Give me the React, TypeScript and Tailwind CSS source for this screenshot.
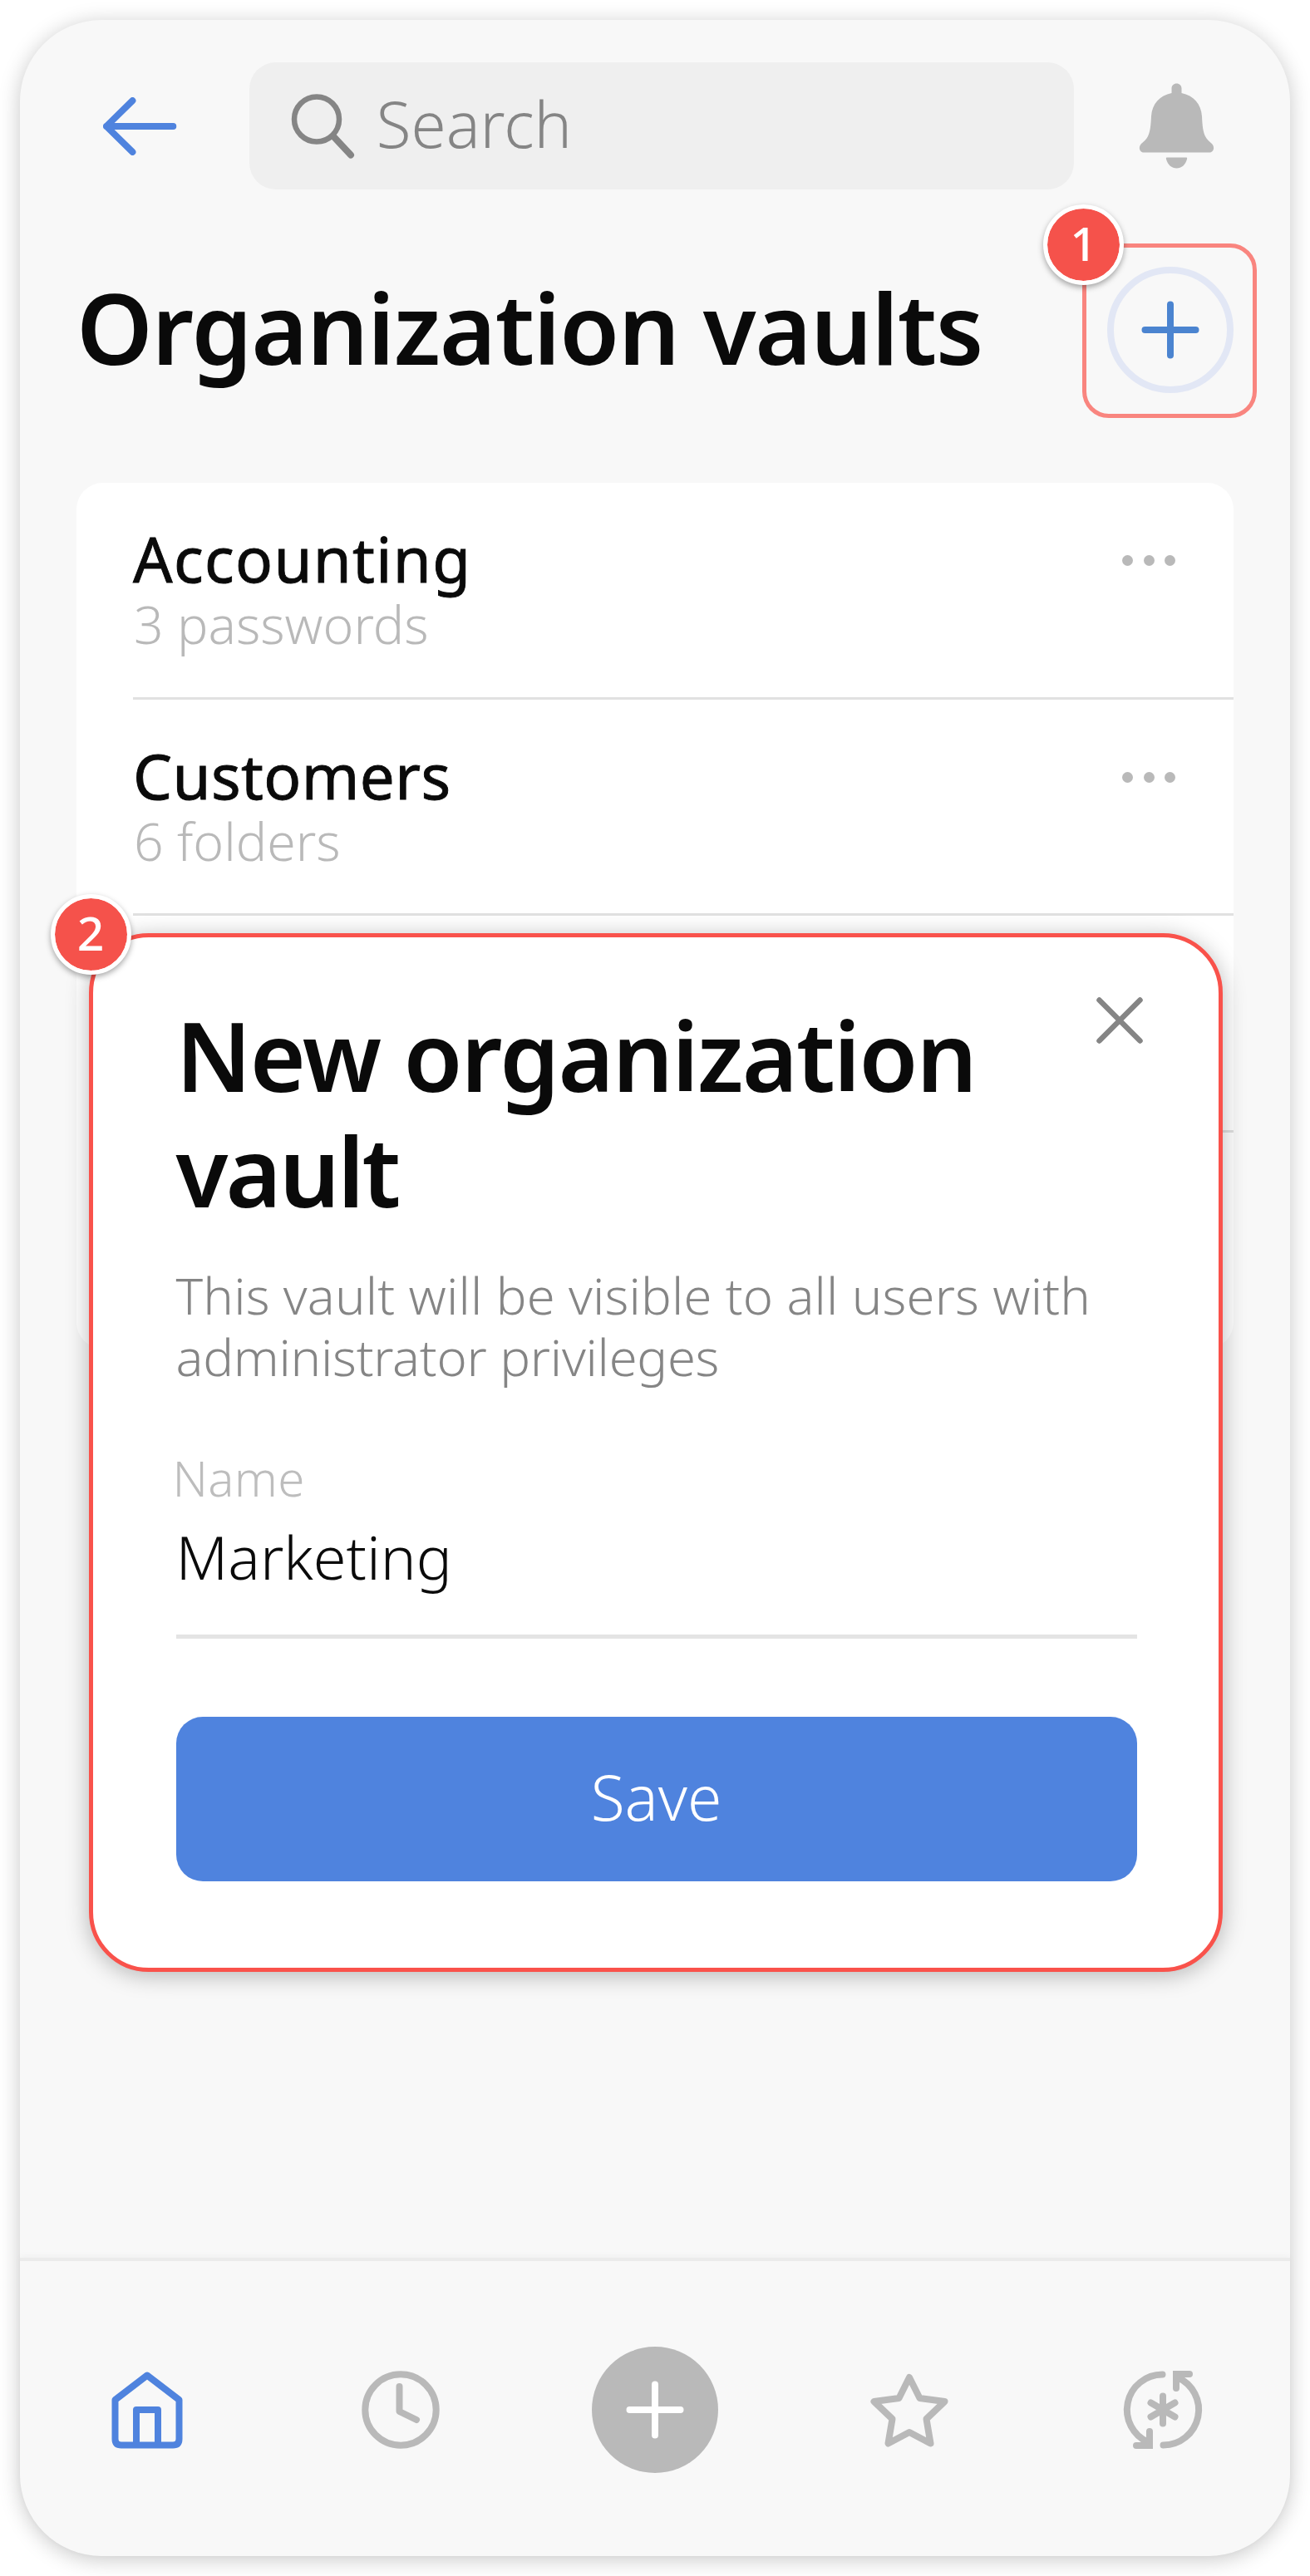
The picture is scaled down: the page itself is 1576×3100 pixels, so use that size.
import type { ReactNode } from "react";

function ArrowLeft() {
  return (
    <svg width="90" height="70" viewBox="0 0 90 70" fill="none" stroke="#4f83de" strokeWidth="8" strokeLinecap="round" strokeLinejoin="round">
      <path d="M35.500 4 L4 35 L35.500 66 M4 35 H84.500" />
    </svg>
  );
}

function Magnifier() {
  return (
    <svg width="78" height="80" viewBox="0 0 78 80" fill="none" stroke="#858585" strokeLinecap="round">
      <circle cx="31" cy="31.500" r="27" strokeWidth="6.500" />
      <path d="M51 52 L72 74.500" strokeWidth="8" />
    </svg>
  );
}

function Bell() {
  return (
    <svg width="92" height="104" viewBox="0 0 92 104" fill="#b9b9b9">
      <path d="M45.500 0.500 C49 0.500 51.500 3 51.500 6.500 V12 C66 15 75 25 76 40 C76.500 52 77.500 59 80 64 C82 68 85 70 88 73 C92 77 90 83.500 85 83.500 H6 C1 83.500 -1 77 3 73 C6 70 9 68 11 64 C13.500 59 14.500 52 15 40 C16 25 25 15 39.500 12 V6.500 C39.500 3 42 0.500 45.500 0.500 Z" />
      <path d="M33.500 89.500 H57.500 Q58.500 89.500 58 91.500 C56 98.500 51.500 102.500 45.500 102.500 C39.500 102.500 35 98.500 33 91.500 Q32.500 89.500 33.500 89.500 Z" />
    </svg>
  );
}

function Plus({ color }: { color: string }) {
  return (
    <svg width="70" height="70" viewBox="0 0 70 70" fill="none" stroke={color} strokeWidth="8" strokeLinecap="round">
      <path d="M35 4.500 V65.500 M4.500 35 H65.500" />
    </svg>
  );
}

function Close() {
  return (
    <svg width="56" height="56" viewBox="0 0 56 56" fill="none" stroke="#858585" strokeWidth="6.500" strokeLinecap="round">
      <path d="M3.500 3.500 L52.500 52.500 M52.500 3.500 L3.500 52.500" />
    </svg>
  );
}

function NavIcon({ color, children }: { color: string; children: ReactNode }) {
  return (
    <svg width="100" height="100" viewBox="-50 -50 100 100" fill="none" stroke={color} strokeWidth="8" strokeLinecap="round" strokeLinejoin="round">
      {children}
    </svg>
  );
}

function Badge({ children, className }: { children: ReactNode; className: string }) {
  return (
    <div className={`absolute flex size-[97px] items-center justify-center rounded-full border-[5.5px] border-white bg-[#f5524b] bg-clip-padding text-[57px] leading-none font-medium text-white shadow-[0_3px_7px_rgba(0,0,0,0.35)] ${className}`}>
      <span className="-mt-1">{children}</span>
    </div>
  );
}

function VaultRow({ name, detail, last, tracking = "" }: { name?: string; detail?: string; last?: boolean; tracking?: string }) {
  return (
    <div className={`ml-[68px] flex h-[260.5px] justify-between pt-[51px] pr-[70px] ${last ? "" : "border-b-[3px] border-[#e1e1e1]"}`}>
      {name && (
        <>
          <div>
            <div className={`text-[74.5px] leading-[80px] text-[#0a0a0a] [-webkit-text-stroke:0.9px_#0a0a0a] ${tracking}`}>{name}</div>
            <div className="mt-1 ml-px text-[62.5px] leading-[70px] font-light text-[#b9b9b9]">{detail}</div>
          </div>
          <div className="mt-[36px] flex h-[13px] gap-[12.5px]">
            <span className="size-[13px] rounded-full bg-[#b9b9b9]" />
            <span className="size-[13px] rounded-full bg-[#b9b9b9]" />
            <span className="size-[13px] rounded-full bg-[#b9b9b9]" />
          </div>
        </>
      )}
    </div>
  );
}

function NewVaultDialog() {
  return (
    <div className="absolute top-[1098.5px] left-[83px] h-[1250px] w-[1364px] rounded-[72px] border-[5.5px] border-[#f9524b] bg-white pt-[72px] pr-[98.5px] pl-[99.5px] shadow-[0_4px_28px_rgba(0,0,0,0.28)]">
      <Badge className="-top-[52px] -left-[51.5px]">2</Badge>
      <div className="flex items-start justify-between">
        <h2 className="w-[1000px] text-[115px] leading-[139.5px] font-semibold tracking-[-1.9px] text-[#0a0a0a]">
          New organization <span className="tracking-[-3px]">vault</span>
        </h2>
        <div className="-mr-[7px]">
          <Close />
        </div>
      </div>
      <p className="mt-[42px] w-[1130px] text-[61.5px] leading-[74.5px] font-light text-[#858585]">
        <span className="tracking-[0.17px]">This vault will be visible to all users with </span>
        <span className="tracking-[-0.25px]">administrator privileges</span>
      </p>
      <div className="mt-[74px] -ml-[4px] text-[58.3px] leading-[70px] font-light tracking-[0.3px] text-[#bdbdbd]">Name</div>
      <div className="mt-[14px] text-[72px] leading-[90px] font-light text-[#0a0a0a]">Marketing</div>
      <div className="mt-[49px] h-[5px] bg-[#e4e4e4]" />
      <button className="mt-[94px] flex h-[198px] w-full items-center justify-center rounded-[32px] bg-[#4f83de] pb-1 text-[75px] leading-none font-light text-white">
        Save
      </button>
    </div>
  );
}

export default function App() {
  return (
    <div className="h-[3100px] w-[1576px] overflow-hidden bg-white p-6 font-['Noto_Sans',sans-serif]">
      <div className="relative flex h-[3051.5px] flex-col rounded-[98px] bg-[#f8f8f8] shadow-[0_4px_26px_rgba(0,0,0,0.22)]">
        <header className="mt-[51px] flex h-[153px] items-center pr-[90px] pl-[100px]">
          <ArrowLeft />
          <div className="ml-[86px] flex h-[153px] w-[994px] items-center rounded-[32px] bg-[#efefef] pl-[50.5px]">
            <Magnifier />
            <span className="-mt-[6px] ml-[24.5px] text-[76.4px] leading-none font-light text-[#858585]">Search</span>
          </div>
          <div className="ml-[78.5px]">
            <Bell />
          </div>
        </header>

        <div className="relative mt-[93px] flex h-[152px] items-start justify-between pr-[68px] pl-[68px]">
          <h1 className="text-[116.7px] leading-[146px] font-semibold tracking-[-1.4px] text-[#0a0a0a]">Organization vaults</h1>
          <div className="flex size-[152px] items-center justify-center rounded-full border-[8px] border-[#e2e7f5]">
            <Plus color="#4b84d0" />
          </div>
          <div className="absolute -top-[28px] left-[1277.5px] h-[210px] w-[210px] rounded-[32px] border-[5.5px] border-[#f9857f]">
            <Badge className="-top-[52.5px] -left-[51.5px]">1</Badge>
          </div>
        </div>

        <div className="mt-[108px] mr-[68px] ml-[68px] rounded-[32px] bg-white">
          <VaultRow name="Accounting" detail="3 passwords" tracking="tracking-[1.3px]" />
          <VaultRow name="Customers" detail="6 folders" tracking="tracking-[0.4px]" />
          <VaultRow />
          <VaultRow last />
        </div>

        <nav className="mt-auto flex h-[359px] items-center rounded-b-[98px] border-t-[4px] border-[#ebebeb] pt-[3px] shadow-[0_-2px_8px_rgba(0,0,0,0.035)]">
          <div className="flex flex-1 justify-center">
            <NavIcon color="#4f83de">
              <path d="M0 -41.500 L38.500 -12 V35 Q38.500 42.500 31 42.500 H-31 Q-38.500 42.500 -38.500 35 V-12 Z M-13 42 V0 H13 V42" />
            </NavIcon>
          </div>
          <div className="flex flex-1 justify-center">
            <NavIcon color="#b9b9b9">
              <circle r="42.700" />
              <path d="M-1.500 -28 V2 L19 12" />
            </NavIcon>
          </div>
          <div className="flex flex-1 justify-center">
            <div className="flex size-[152px] items-center justify-center rounded-full bg-[#b9b9b9]">
              <Plus color="#ffffff" />
            </div>
          </div>
          <div className="flex flex-1 justify-center">
            <NavIcon color="#b9b9b9">
              <path d="M0 -39 L12.500 -14 L42.500 -10 L20.500 11 L25.500 40.500 L0 27 L-25.500 40.500 L-20.500 11 L-42.500 -10 L-12.500 -14 Z" />
            </NavIcon>
          </div>
          <div className="flex flex-1 justify-center">
            <NavIcon color="#b9b9b9">
              <path d="M-0.500 -42.500 A42.500 42.500 0 0 0 -17.500 39" />
              <path d="M0.500 42.500 A42.500 42.500 0 0 0 17.500 -39" />
              <path d="M-16 26 V43 H-32 M16 -26 V-43 H32" strokeLinejoin="miter" />
              <path d="M0 -16.500 V16.500 M-14.500 -8.500 L14.500 8.500 M14.500 -8.500 L-14.500 8.500" />
            </NavIcon>
          </div>
        </nav>

        <NewVaultDialog />
      </div>
    </div>
  );
}
